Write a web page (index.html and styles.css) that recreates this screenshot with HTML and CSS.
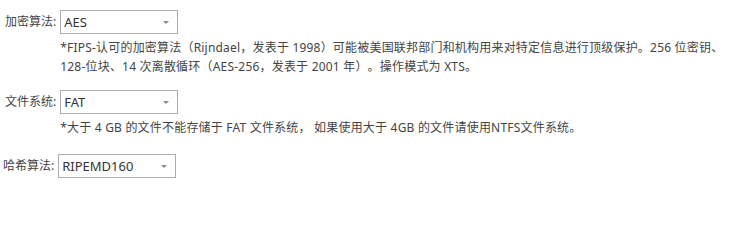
FILE: index.html
```html
<!DOCTYPE html>
<html lang="zh-CN">
<head>
<meta charset="utf-8">
<title>加密设置</title>
<link rel="stylesheet" href="styles.css">
</head>
<body>
<div class="form">
  <div class="row">
    <span class="label">加密算法:</span>
    <div class="field">
      <div class="select"><span class="value">AES</span><span class="arrow"></span></div>
      <p class="note">*FIPS-认可的加密算法（Rijndael，发表于 1998）可能被美国联邦部门和机构用来对特定信息进行顶级保护。256 位密钥、<br>128-位块、14 次离散循环（AES-256，发表于 2001 年）。操作模式为 XTS。</p>
    </div>
  </div>
  <div class="row">
    <span class="label">文件系统:</span>
    <div class="field">
      <div class="select"><span class="value">FAT</span><span class="arrow"></span></div>
      <p class="note note-spaced">*大于 4 GB 的文件不能存储于 FAT 文件系统， 如果使用大于 4GB 的文件请使用NTFS文件系统。</p>
    </div>
  </div>
  <div class="row">
    <span class="label label-narrow">哈希算法:</span>
    <div class="field">
      <div class="select"><span class="value">RIPEMD160</span><span class="arrow"></span></div>
    </div>
  </div>
</div>
</body>
</html>
```
FILE: styles.css
```css
html, body {
  margin: 0;
  padding: 0;
  background: #ffffff;
}
body {
  font-family: "Segoe UI", "Noto Sans", "Noto Sans CJK SC", sans-serif;
  font-size: 12px;
  color: #444444;
}
.form {
  display: flex;
  flex-direction: column;
  gap: 14px;
  padding: 10px 0 0 5px;
}
.row {
  display: flex;
  align-items: flex-start;
  gap: 4px;
}
.label {
  line-height: 24px;
  white-space: nowrap;
}
.label-narrow {
  margin-left: -2px;
}
.field {
  display: flex;
  flex-direction: column;
}
.select {
  box-sizing: border-box;
  width: 118px;
  height: 24px;
  border: 1px solid #abadb3;
  background: #ffffff;
  display: flex;
  align-items: center;
  justify-content: space-between;
  padding: 0 8px 0 3px;
  font-size: 13px;
  color: #333333;
}
.arrow {
  width: 0;
  height: 0;
  border-left: 3px solid transparent;
  border-right: 3px solid transparent;
  border-top: 3px solid #8a8a8a;
  margin-top: 1px;
}
.note {
  margin: 4px 0 0 0;
  line-height: 19px;
  white-space: nowrap;
  letter-spacing: 0.2px;
  text-spacing-trim: space-all;
}
.note-spaced {
  margin-bottom: 3px;
}
```
